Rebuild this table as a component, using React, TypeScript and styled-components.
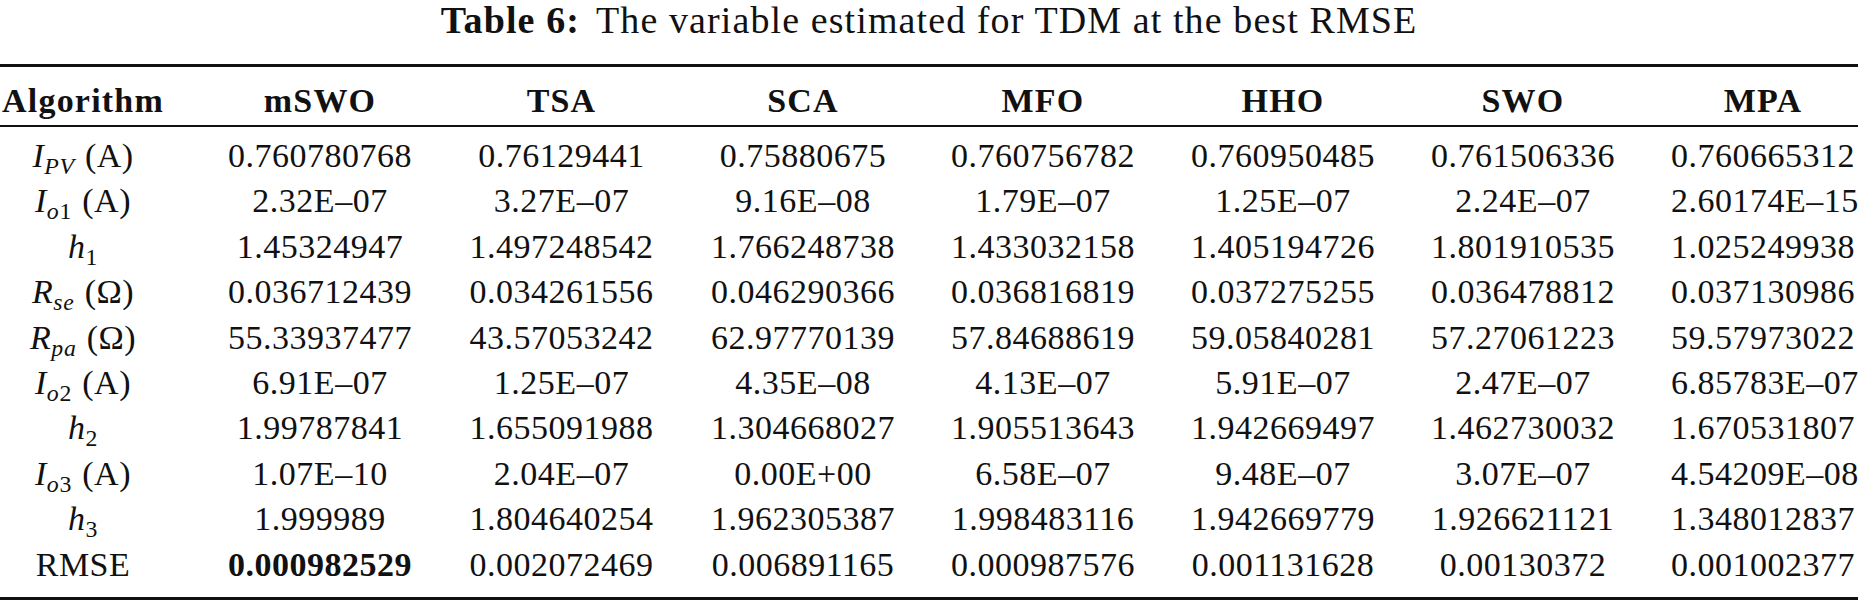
import React from "react";
import styled, { createGlobalStyle } from "styled-components";

const Global = createGlobalStyle`
  html, body { margin: 0; padding: 0; background: #ffffff; }
  body {
    font-family: "Liberation Serif", "Times New Roman", serif;
    color: #111111;
  }
`;

const Page = styled.div`
  width: 1858px;
`;

const Caption = styled.div`
  text-align: center;
  font-size: 38px;
  line-height: 40px;
  letter-spacing: 1.1px;
  white-space: nowrap;
`;

const CaptionLabel = styled.b`
  font-weight: 700;
  margin-right: 16px;
`;

const Table = styled.div`
  margin-top: 24px;
  border-top: 3px solid #111;
  border-bottom: 3px solid #111;
`;

const Row = styled.div<{ $head?: boolean }>`
  display: grid;
  grid-template-columns: 172px 184px 187px repeat(5, 184px);
  column-gap: 56px;
  font-size: 34px;
  line-height: ${(p) => (p.$head ? "45px" : "45.4px")};
  ${(p) =>
    p.$head
      ? `padding: 11px 0 2px; border-bottom: 2px solid #111; font-weight: 700; letter-spacing: 1.2px;`
      : `letter-spacing: 0.5px;`}
`;

const Body = styled.div`
  padding: 6px 0 10px;
`;

const Cell = styled.div<{ $first?: boolean; $bold?: boolean }>`
  text-align: center;
  white-space: nowrap;
  padding-right: ${(p) => (p.$first ? "6px" : "0")};
  font-weight: ${(p) => (p.$bold ? 700 : "inherit")};
`;

const Var = styled.i`
  font-style: italic;
`;

const Sub = styled.sub`
  font-size: 0.7em;
  vertical-align: -0.28em;
  line-height: 0;
  letter-spacing: 0.8px;
`;

const Unit = styled.span`
  margin-left: 10px;
`;

type RowData = { label: React.ReactNode; values: string[]; boldIndex?: number };

const headers = ["mSWO", "TSA", "SCA", "MFO", "HHO", "SWO", "MPA"];

const rows: RowData[] = [
  {
    label: (
      <>
        <Var>I</Var>
        <Sub>
          <Var>PV</Var>
        </Sub>
        <Unit>(A)</Unit>
      </>
    ),
    values: ["0.760780768", "0.76129441", "0.75880675", "0.760756782", "0.760950485", "0.761506336", "0.760665312"],
  },
  {
    label: (
      <>
        <Var>I</Var>
        <Sub>
          <Var>o</Var>1
        </Sub>
        <Unit>(A)</Unit>
      </>
    ),
    values: ["2.32E–07", "3.27E–07", "9.16E–08", "1.79E–07", "1.25E–07", "2.24E–07", "2.60174E–15"],
  },
  {
    label: (
      <>
        <Var>h</Var>
        <Sub>1</Sub>
      </>
    ),
    values: ["1.45324947", "1.497248542", "1.766248738", "1.433032158", "1.405194726", "1.801910535", "1.025249938"],
  },
  {
    label: (
      <>
        <Var>R</Var>
        <Sub>
          <Var>se</Var>
        </Sub>
        <Unit>(Ω)</Unit>
      </>
    ),
    values: ["0.036712439", "0.034261556", "0.046290366", "0.036816819", "0.037275255", "0.036478812", "0.037130986"],
  },
  {
    label: (
      <>
        <Var>R</Var>
        <Sub>
          <Var>pa</Var>
        </Sub>
        <Unit>(Ω)</Unit>
      </>
    ),
    values: ["55.33937477", "43.57053242", "62.97770139", "57.84688619", "59.05840281", "57.27061223", "59.57973022"],
  },
  {
    label: (
      <>
        <Var>I</Var>
        <Sub>
          <Var>o</Var>2
        </Sub>
        <Unit>(A)</Unit>
      </>
    ),
    values: ["6.91E–07", "1.25E–07", "4.35E–08", "4.13E–07", "5.91E–07", "2.47E–07", "6.85783E–07"],
  },
  {
    label: (
      <>
        <Var>h</Var>
        <Sub>2</Sub>
      </>
    ),
    values: ["1.99787841", "1.655091988", "1.304668027", "1.905513643", "1.942669497", "1.462730032", "1.670531807"],
  },
  {
    label: (
      <>
        <Var>I</Var>
        <Sub>
          <Var>o</Var>3
        </Sub>
        <Unit>(A)</Unit>
      </>
    ),
    values: ["1.07E–10", "2.04E–07", "0.00E+00", "6.58E–07", "9.48E–07", "3.07E–07", "4.54209E–08"],
  },
  {
    label: (
      <>
        <Var>h</Var>
        <Sub>3</Sub>
      </>
    ),
    values: ["1.999989", "1.804640254", "1.962305387", "1.998483116", "1.942669779", "1.926621121", "1.348012837"],
  },
  {
    label: "RMSE",
    values: ["0.000982529", "0.002072469", "0.006891165", "0.000987576", "0.001131628", "0.00130372", "0.001002377"],
    boldIndex: 0,
  },
];

export default function App() {
  return (
    <Page>
      <Global />
      <Caption>
        <CaptionLabel>Table 6:</CaptionLabel>The variable estimated for TDM at the best RMSE
      </Caption>
      <Table>
        <Row $head>
          <Cell $first>Algorithm</Cell>
          {headers.map((h) => (
            <Cell key={h}>{h}</Cell>
          ))}
        </Row>
        <Body>
          {rows.map((r, i) => (
            <Row key={i}>
              <Cell $first>{r.label}</Cell>
              {r.values.map((v, j) => (
                <Cell key={j} $bold={r.boldIndex === j}>
                  {v}
                </Cell>
              ))}
            </Row>
          ))}
        </Body>
      </Table>
    </Page>
  );
}
